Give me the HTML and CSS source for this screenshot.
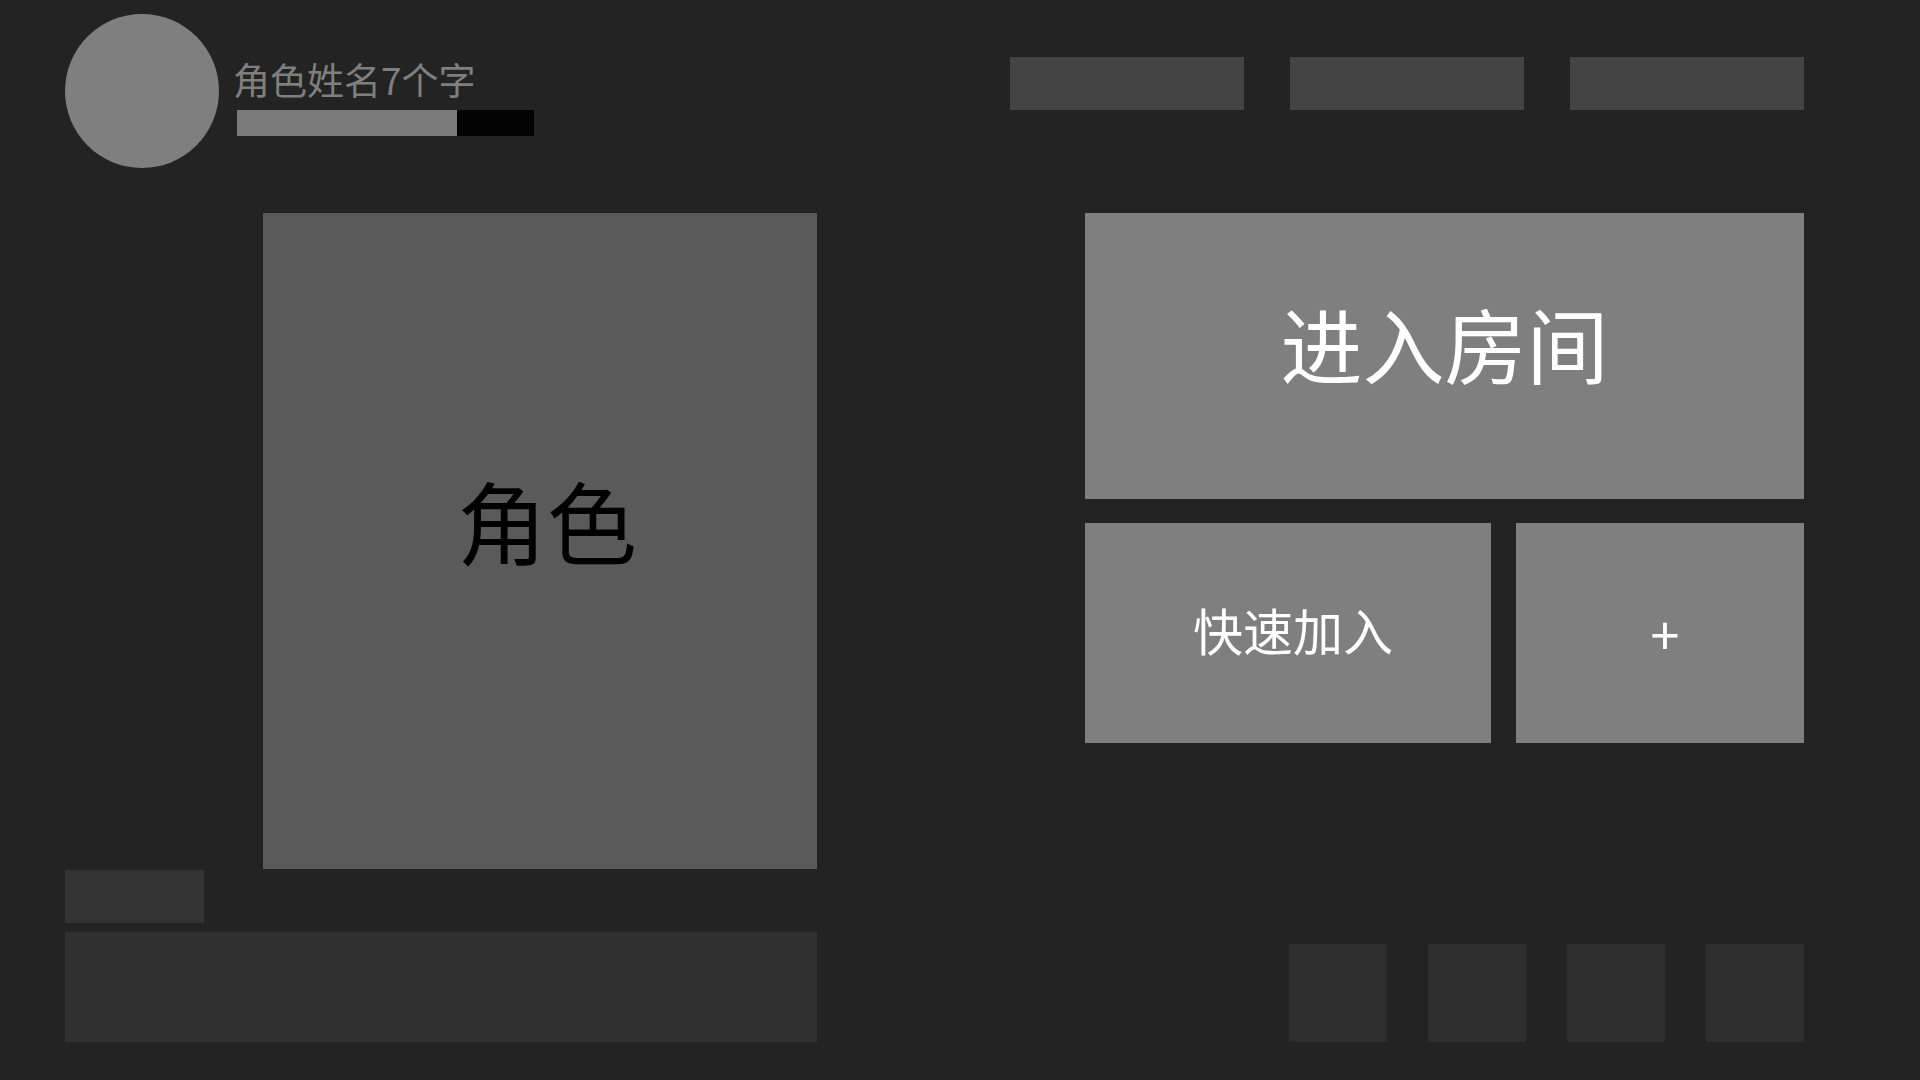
FILE: index.html
```html
<!DOCTYPE html>
<html lang="zh-CN">
<head>
<meta charset="utf-8">
<title>大厅</title>
<link rel="stylesheet" href="styles.css">
</head>
<body>
<div class="page">
  <header class="header">
    <div class="profile">
      <div class="avatar"></div>
      <div class="info">
        <div class="name">角色姓名7个字</div>
        <div class="bar"><div class="bar-fill" style="width: 74%"></div></div>
      </div>
    </div>
    <nav class="top-buttons">
      <div class="top-btn"></div>
      <div class="top-btn"></div>
      <div class="top-btn"></div>
    </nav>
  </header>
  <main class="main">
    <section class="left">
      <div class="character"><span class="character-label">角色</span></div>
      <div class="small-box"></div>
      <div class="chat-box"></div>
    </section>
    <section class="right">
      <div class="btn enter-room"><span>进入房间</span></div>
      <div class="btn-row">
        <div class="btn quick-join"><span>快速加入</span></div>
        <div class="btn add"><span>+</span></div>
      </div>
      <div class="squares">
        <div class="square"></div>
        <div class="square"></div>
        <div class="square"></div>
        <div class="square"></div>
      </div>
    </section>
  </main>
</div>
</body>
</html>
```
FILE: styles.css
```css
* { box-sizing: border-box; }
html, body {
  margin: 0;
  padding: 0;
  width: 1920px;
  height: 1080px;
  background: #232323;
  overflow: hidden;
  font-family: "Noto Sans CJK SC", "Noto Sans", sans-serif;
}
.page {
  padding: 14px 116px 0 65px;
  display: flex;
  flex-direction: column;
}
.header {
  display: flex;
  justify-content: space-between;
  align-items: flex-start;
  height: 154px;
}
.profile {
  display: flex;
  align-items: flex-start;
}
.avatar {
  width: 154px;
  height: 154px;
  border-radius: 50%;
  background: #7f7f7f;
}
.info {
  margin-left: 14px;
  margin-top: 47px;
  display: flex;
  flex-direction: column;
}
.name {
  font-size: 37px;
  line-height: 37px;
  color: #7f7f7f;
  white-space: nowrap;
}
.bar {
  margin-top: 12px;
  margin-left: 4px;
  width: 297px;
  height: 26px;
  background: #030303;
}
.bar-fill {
  height: 100%;
  background: #7a7a7a;
}
.top-buttons {
  display: flex;
  gap: 46px;
  margin-top: 43px;
}
.top-btn {
  width: 234px;
  height: 53px;
  background: #444444;
}
.main {
  margin-top: 45px;
  display: flex;
  justify-content: space-between;
}
.left {
  width: 752px;
  display: flex;
  flex-direction: column;
}
.character {
  margin-left: 198px;
  width: 554px;
  height: 656px;
  background: #5a5a5a;
  display: flex;
  align-items: center;
  justify-content: center;
  padding: 0 0 44px 14px;
}
.character-label {
  font-size: 90px;
  line-height: 1;
  color: #000;
}
.small-box {
  margin-top: 1px;
  width: 139px;
  height: 53px;
  background: #333333;
}
.chat-box {
  margin-top: 9px;
  height: 110px;
  background: #313131;
}
.right {
  width: 719px;
  display: flex;
  flex-direction: column;
}
.btn {
  background: #7f7f7f;
  color: #fff;
  display: flex;
  align-items: center;
  justify-content: center;
}
.btn span { line-height: 1; }
.enter-room {
  height: 286px;
  font-size: 82px;
  padding-bottom: 27px;
}
.btn-row {
  margin-top: 24px;
  display: flex;
  gap: 25px;
  height: 220px;
}
.quick-join {
  width: 406px;
  font-size: 50px;
  padding-bottom: 8px;
  padding-left: 10px;
}
.add {
  flex: 1;
  font-size: 52px;
  padding-left: 10px;
}
.squares {
  margin-top: auto;
  display: flex;
  justify-content: flex-end;
  gap: 41px;
}
.square {
  width: 98px;
  height: 98px;
  background: #2e2e2e;
}
```
